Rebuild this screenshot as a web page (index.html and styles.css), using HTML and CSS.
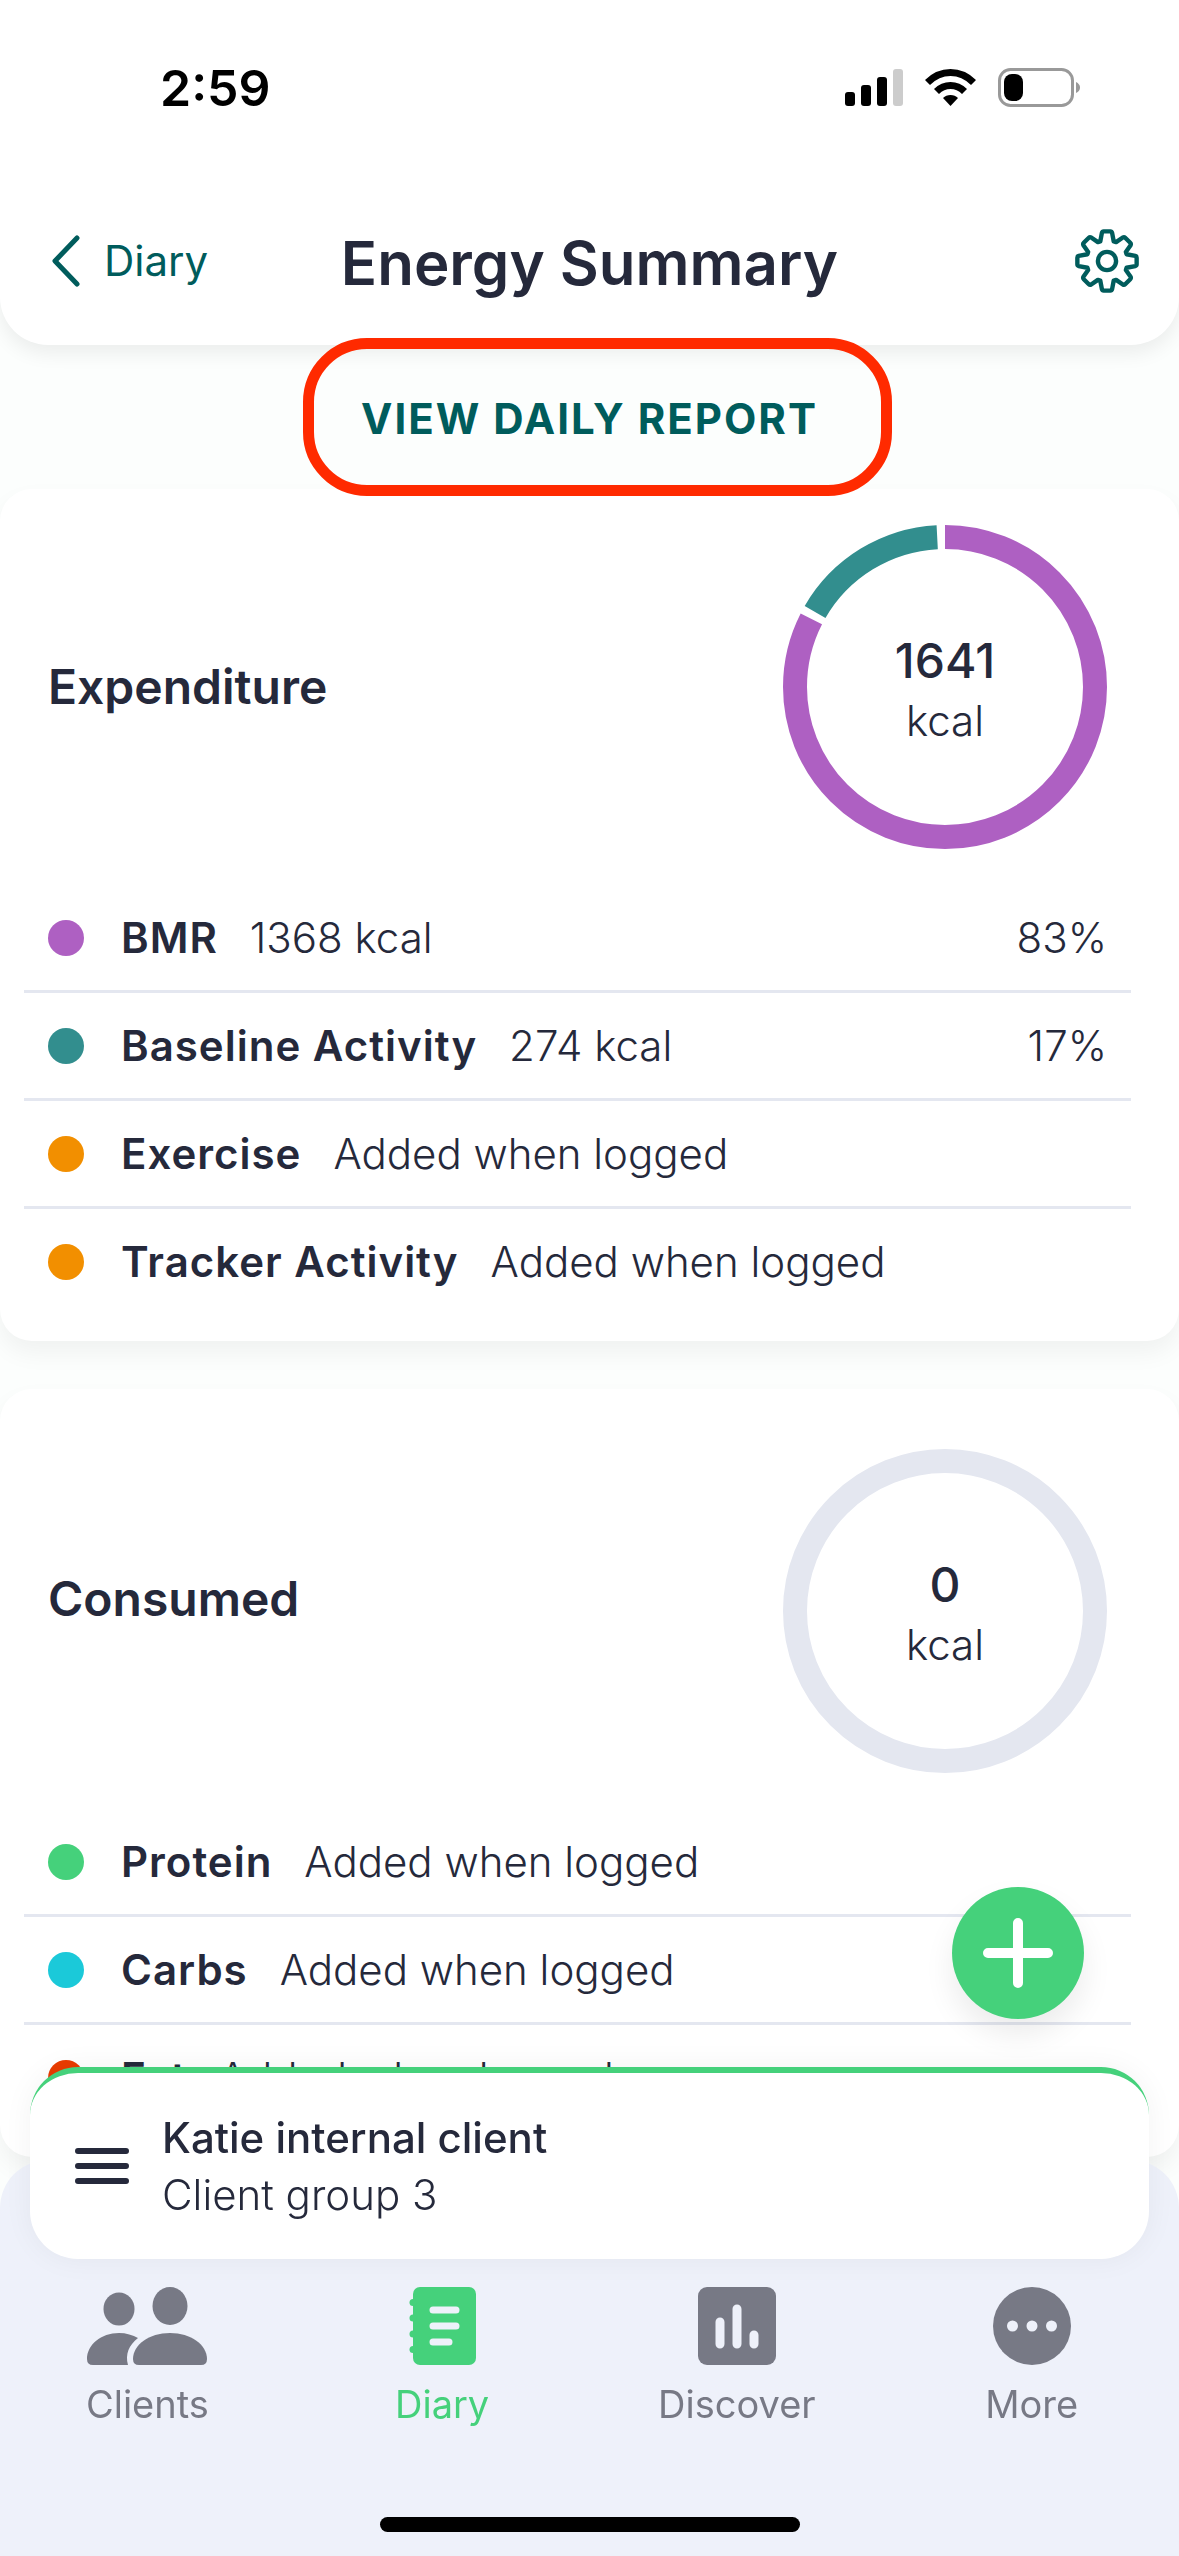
FILE: index.html
```html
<!DOCTYPE html>
<html lang="en">

<head>
    <meta charset="UTF-8">
    <meta name="viewport" content="width=device-width, initial-scale=1.0">
    <title>Energy Summary</title>
    <link rel="stylesheet" href="styles.css">
</head>

<body>
    <header class="header">
        <div class="status">
            <span class="time">2:59</span>
            <div class="status-icons">
                <svg width="58" height="38" viewBox="0 0 58 38">
                    <rect x="0" y="23" width="10" height="14" rx="3" />
                    <rect x="16" y="16" width="10" height="21" rx="3" />
                    <rect x="32" y="8" width="10" height="29" rx="3" />
                    <rect x="48" y="0" width="10" height="37" rx="3" fill="#ccc" />
                </svg>
                <svg width="51" height="38" viewBox="0 0 51 38">
                    <path d="M0 11 Q11 0 25.500 0 T51 11 L46 16 Q37 7 25.500 7 T5 16 Z" />
                    <path d="M9 20 Q16 13 25.500 13 T42 20 L37 25 Q32 20 25.500 20 T14 25 Z" />
                    <path d="M18 29 Q21 26 25.500 26 T33 29 L25.500 37 Z" />
                </svg>
                <svg width="83" height="40" viewBox="0 0 83 40">
                    <rect x="1.500" y="1.500" width="73" height="36" rx="11" fill="none" stroke="#999" stroke-width="3" />
                    <rect x="6" y="6" width="19" height="27" rx="8" />
                    <path d="M78 14 Q82 16 82 19.500 T78 25 Z" fill="#999" />
                </svg>
            </div>
        </div>
        <div class="nav">
            <a href="#" class="back">
                <svg width="28" height="52" viewBox="0 0 28 52" fill="none" stroke="currentColor" stroke-width="5"
                    stroke-linecap="round" stroke-linejoin="round">
                    <path d="M25 3 L3 26 L25 49" />
                </svg>
                <span>Diary</span>
            </a>
            <h1>Energy Summary</h1>
            <button class="settings" aria-label="Settings">
                <svg width="64" height="64" viewBox="-95 -95 190 190" fill="none" stroke="currentColor"
                    stroke-width="13" stroke-linejoin="round">
                    <path id="teeth"
                        d="M0 -88 H10 Q14 -88 15 -84 L20 -58 L27 -56 L47 -70 Q51 -72 54 -69 L69 -54 Q72 -51 70 -47 L56 -27 L58 -20 L84 -15 Q88 -14 88 -10 V0" />
                    <use href="#teeth" transform="rotate(90)" />
                    <use href="#teeth" transform="rotate(180)" />
                    <use href="#teeth" transform="rotate(270)" />
                    <circle r="27" />
                </svg>
            </button>
        </div>
    </header>

    <main>
        <div class="report">
            <button class="report-btn">VIEW DAILY REPORT</button>
        </div>

        <section class="card">
            <div class="card-head">
                <h2>Expenditure</h2>
                <div class="ring">
                    <svg viewBox="0 0 324 324" fill="none" stroke-width="24">
                        <g transform="rotate(-90 162 162)">
                            <circle cx="162" cy="162" r="150" stroke="#ae60c2" pathLength="360"
                                stroke-dasharray="297 63" />
                            <circle cx="162" cy="162" r="150" stroke="#328e8e" pathLength="360"
                                stroke-dasharray="57 303" stroke-dashoffset="-300" />
                        </g>
                    </svg>
                    <div class="ring-text"><strong>1641</strong><span>kcal</span></div>
                </div>
            </div>
            <ul class="list">
                <li><i class="dot purple"></i><b>BMR</b><span>1368 kcal</span><em>83%</em></li>
                <li><i class="dot teal"></i><b>Baseline Activity</b><span>274 kcal</span><em>17%</em></li>
                <li><i class="dot orange"></i><b>Exercise</b><span>Added when logged</span></li>
                <li><i class="dot orange"></i><b>Tracker Activity</b><span>Added when logged</span></li>
            </ul>
        </section>

        <section class="card">
            <div class="card-head">
                <h2>Consumed</h2>
                <div class="ring ring-empty">
                    <svg viewBox="0 0 324 324" fill="none" stroke-width="24">
                        <circle cx="162" cy="162" r="150" stroke="#e4e7f0" />
                    </svg>
                    <div class="ring-text"><strong>0</strong><span>kcal</span></div>
                </div>
            </div>
            <ul class="list">
                <li><i class="dot green"></i><b>Protein</b><span>Added when logged</span></li>
                <li><i class="dot cyan"></i><b>Carbs</b><span>Added when logged</span></li>
                <li><i class="dot red"></i><b>Fat</b><span>Added when logged</span></li>
            </ul>
        </section>
    </main>

    <button class="add" aria-label="Add">
        <svg width="70" height="70" viewBox="0 0 70 70" stroke="#fff" stroke-width="10" stroke-linecap="round">
            <path d="M35 5 V65 M5 35 H65" />
        </svg>
    </button>

    <footer class="dock">
        <div class="client">
            <button class="menu" aria-label="Menu">
                <svg width="54" height="36" viewBox="0 0 54 36" stroke="#25293b" stroke-width="6"
                    stroke-linecap="round">
                    <path d="M3 3 H51 M3 18 H51 M3 33 H51" />
                </svg>
            </button>
            <div class="client-info">
                <strong>Katie internal client</strong>
                <span>Client group 3</span>
            </div>
        </div>
        <nav class="tabs">
            <a href="#">
                <svg width="120" height="78" viewBox="0 0 120 78" fill="currentColor">
                    <ellipse cx="32" cy="22" rx="15.500" ry="16.500" />
                    <ellipse cx="83" cy="19" rx="17.500" ry="19" />
                    <path d="M0 72 C0 58 14 46 32 46 C39 46 46 48 51 51 C42 58 38 67 41 78 H6 Q0 78 0 72 Z" />
                    <path d="M46 72 C46 58 62 46 83 46 S120 58 120 72 Q120 78 114 78 H52 Q46 78 46 72 Z" />
                </svg>
                <span>Clients</span>
            </a>
            <a href="#" class="active">
                <svg width="67" height="78" viewBox="0 0 67 78" fill="currentColor">
                    <rect x="4" y="0" width="63" height="78" rx="7" />
                    <circle cx="4" cy="15.500" r="3.500" />
                    <circle cx="4" cy="31" r="3.500" />
                    <circle cx="4" cy="47" r="3.500" />
                    <circle cx="4" cy="62.500" r="3.500" />
                    <path d="M24 23 H47 M24 39 H47 M24 55 H40" stroke="#eef1fa" stroke-width="7"
                        stroke-linecap="round" />
                </svg>
                <span>Diary</span>
            </a>
            <a href="#">
                <svg width="78" height="78" viewBox="0 0 78 78" fill="currentColor">
                    <rect width="78" height="78" rx="9" />
                    <path d="M22 35 V57 M39 22 V57 M56 48 V57" stroke="#eef1fa" stroke-width="9"
                        stroke-linecap="round" />
                </svg>
                <span>Discover</span>
            </a>
            <a href="#">
                <svg width="78" height="78" viewBox="0 0 78 78" fill="currentColor">
                    <circle cx="39" cy="39" r="39" />
                    <path d="M19.500 39 h0 M39 39 h0 M58.500 39 h0" stroke="#eef1fa" stroke-width="11"
                        stroke-linecap="round" />
                </svg>
                <span>More</span>
            </a>
        </nav>
        <div class="home-bar"></div>
    </footer>
</body>

</html>
```
FILE: styles.css
```css
* {
    margin: 0;
    padding: 0;
    box-sizing: border-box;
}

body {
    background-color: #fcfefd;
    color: #25293b;
    font-family: Inter, "Liberation Sans", sans-serif;
    font-size: 42px;
    font-weight: 300;
    line-height: 60px;
}

button {
    border: none;
    background: none;
    color: inherit;
    font: inherit;
    cursor: pointer;
}

a {
    color: inherit;
    text-decoration: none;
}

svg {
    display: block;
}

/* header */
.header {
    position: relative;
    background-color: #fff;
    border-radius: 0 0 48px 48px;
    box-shadow: 0 8px 20px rgba(0, 20, 10, .07);
    padding-bottom: 48px;
}

.status {
    display: flex;
    justify-content: space-between;
    align-items: center;
    padding: 58px 98px 0 160px;
    color: #000;
}

.time {
    font-size: 50px;
    font-weight: 600;
}

.status-icons {
    display: flex;
    align-items: center;
    gap: 22px;
}

.nav {
    display: grid;
    grid-template-columns: 1fr auto 1fr;
    align-items: center;
    margin-top: 106px;
    padding: 0 40px;
    height: 73px;
}

.back {
    display: flex;
    align-items: center;
    gap: 24px;
    padding-left: 12px;
    color: #005c5c;
    font-weight: 400;
}

.nav h1 {
    font-size: 60px;
    font-weight: 600;
    padding-top: 4px;
}

.settings {
    justify-self: end;
    color: #005c5c;
}

/* daily report */
.report {
    display: flex;
    justify-content: center;
    padding: 44px 0 40px;
}

.report-btn {
    position: relative;
    color: #005c5c;
    font-weight: 700;
    letter-spacing: 2px;
}

.report-btn::after {
    content: "";
    position: absolute;
    inset: -51px -74px -47px -58px;
    border: 11px solid #ff2a00;
    border-radius: 64px;
}

/* cards */
.card {
    background-color: #fff;
    border-radius: 32px;
    box-shadow: 0 12px 24px rgba(0, 20, 10, .05);
    padding: 36px 48px 24px 24px;
    margin-bottom: 48px;
}

.card-head {
    display: flex;
    justify-content: space-between;
    align-items: center;
    padding: 0 24px 36px;
}

.card-head h2 {
    font-size: 48px;
    font-weight: 600;
}

.ring {
    position: relative;
    width: 324px;
    height: 324px;
}

.ring-empty {
    margin-top: 24px;
}

.ring-text {
    position: absolute;
    inset: 8px 0 0;
    display: flex;
    flex-direction: column;
    align-items: center;
    justify-content: center;
}

.ring-text strong {
    font-size: 48px;
    font-weight: 500;
}

.list {
    list-style: none;
}

.list li {
    display: flex;
    align-items: center;
    height: 108px;
    padding: 0 24px;
    border-bottom: 3px solid #e4e7f0;
}

.list li:last-child {
    border-bottom-color: transparent;
}

.list b {
    font-weight: 600;
    letter-spacing: 1px;
    margin-right: 32px;
}

.list em {
    font-style: normal;
    margin-left: auto;
}

.dot {
    width: 36px;
    height: 36px;
    border-radius: 50%;
    margin-right: 37px;
}

.purple {
    background-color: #ae60c2;
}

.teal {
    background-color: #328e8e;
}

.orange {
    background-color: #f28f00;
}

.green {
    background-color: #45d17b;
}

.cyan {
    background-color: #1bc9d9;
}

.red {
    background-color: #e93b00;
}

/* floating button */
.add {
    position: fixed;
    right: 95px;
    bottom: 537px;
    display: flex;
    align-items: center;
    justify-content: center;
    width: 132px;
    height: 132px;
    border-radius: 50%;
    background-color: #45d17b;
    box-shadow: 0 16px 30px rgba(0, 0, 0, .08);
}

/* bottom dock */
.dock {
    position: fixed;
    left: 0;
    right: 0;
    bottom: 0;
    background-color: #eef1fa;
    border-radius: 48px 48px 0 0;
    padding-bottom: 24px;
}

.client {
    display: flex;
    align-items: center;
    gap: 33px;
    height: 192px;
    margin: -93px 30px 28px;
    padding: 0 45px;
    background-color: #fff;
    border-top: 6px solid #45d17b;
    border-radius: 48px;
    box-shadow: 0 0 30px rgba(0, 0, 0, .05);
}

.client-info {
    display: flex;
    flex-direction: column;
    line-height: 57px;
}

.client-info strong {
    font-weight: 500;
}

.tabs {
    display: grid;
    grid-template-columns: repeat(4, 1fr);
}

.tabs a {
    display: flex;
    flex-direction: column;
    align-items: center;
    gap: 9px;
    color: #777985;
    font-size: 38px;
    font-weight: 400;
}

.tabs .active {
    color: #45d17b;
}

.home-bar {
    width: 420px;
    height: 15px;
    margin: 83px auto 0;
    border-radius: 8px;
    background-color: #000;
}
```
